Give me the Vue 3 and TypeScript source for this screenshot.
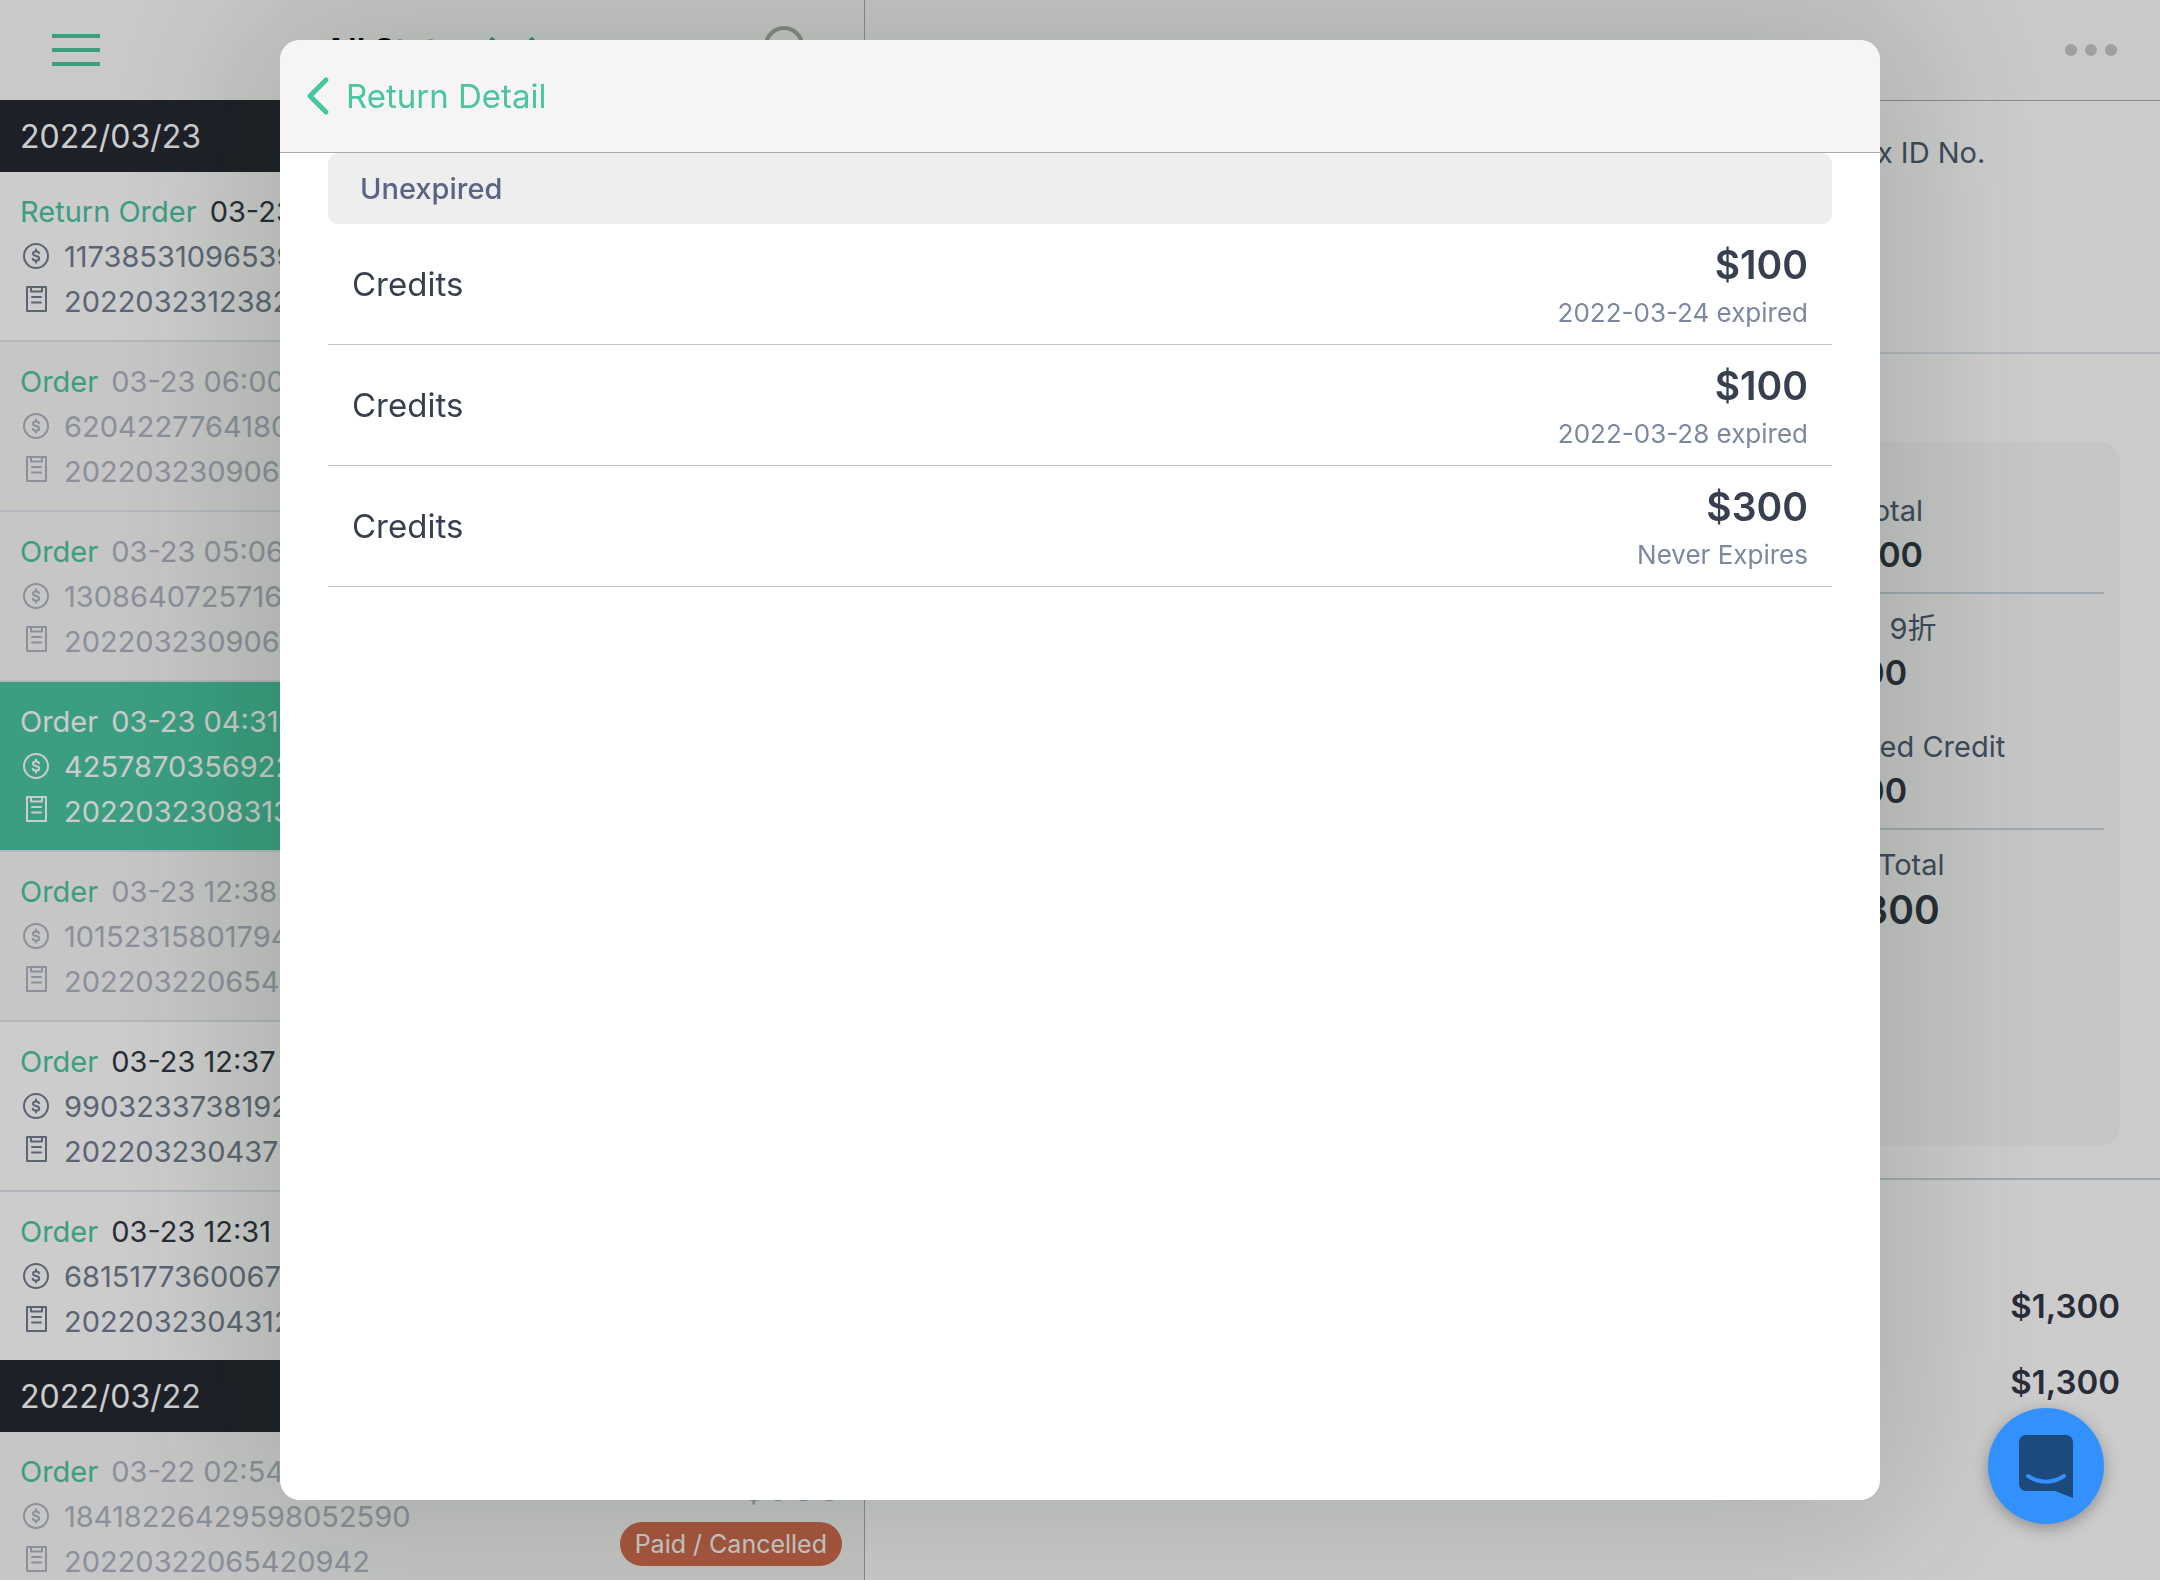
<script setup lang="ts">
type Tone = 'normal' | 'muted' | 'selected'

interface Order {
  kind: string
  time: string
  account: string
  serial: string
  tone: Tone
  amount?: string
  status?: string
}

interface Day {
  date: string
  orders: Order[]
}

const days: Day[] = [
  {
    date: '2022/03/23',
    orders: [
      { kind: 'Return Order', time: '03-23 12:38', account: '11738531096539', serial: '20220323123823', tone: 'normal' },
      { kind: 'Order', time: '03-23 06:00', account: '62042277641802', serial: '20220323090612', tone: 'muted' },
      { kind: 'Order', time: '03-23 05:06', account: '13086407257163', serial: '20220323090611', tone: 'muted' },
      { kind: 'Order', time: '03-23 04:31', account: '42578703569221', serial: '20220323083132', tone: 'selected' },
      { kind: 'Order', time: '03-23 12:38', account: '10152315801794', serial: '20220322065420', tone: 'muted' },
      { kind: 'Order', time: '03-23 12:37', account: '99032337381922', serial: '20220323043712', tone: 'normal' },
      { kind: 'Order', time: '03-23 12:31', account: '68151773600671', serial: '20220323043122', tone: 'normal' },
    ],
  },
  {
    date: '2022/03/22',
    orders: [
      {
        kind: 'Order',
        time: '03-22 02:54',
        account: '18418226429598052590',
        serial: '20220322065420942',
        tone: 'muted',
        amount: '$500',
        status: 'Paid / Cancelled',
      },
    ],
  },
]

const summary = [
  { label: 'Subtotal', value: '$1,300', line: true, large: false },
  { label: '全館- 9折', value: '-$100', line: false, large: false },
  { label: 'Applied Credit', value: '-$100', line: true, large: false },
  { label: 'Paid Total', value: '$1,300', line: false, large: true },
]

const payments = ['$1,300', '$1,300']

const credits = [
  { name: 'Credits', amount: '$100', note: '2022-03-24 expired' },
  { name: 'Credits', amount: '$100', note: '2022-03-28 expired' },
  { name: 'Credits', amount: '$300', note: 'Never Expires' },
]
</script>

<template>
  <div class="app">
    <div class="shell">
      <aside class="sidebar">
        <header class="bar">
          <button class="menu" type="button" aria-label="Menu"><i></i><i></i><i></i></button>
          <button class="filter" type="button">
            All Status
            <svg width="48" height="28" viewBox="0 0 48 28" fill="none" stroke="#2fb890" stroke-width="5" stroke-linecap="round">
              <path d="M4 4 24 23 44 4" />
            </svg>
          </button>
          <button class="search" type="button" aria-label="Search">
            <svg width="50" height="50" viewBox="0 0 50 50" fill="none" stroke="#a9aea9" stroke-width="4" stroke-linecap="round">
              <circle cx="20" cy="20" r="18" />
              <path d="m34 34 12 12" />
            </svg>
          </button>
        </header>

        <section v-for="day in days" :key="day.date">
          <h2 class="day">{{ day.date }}</h2>
          <ul class="orders">
            <li v-for="order in day.orders" :key="order.account" class="order" :class="order.tone">
              <div class="info">
                <p><span class="kind">{{ order.kind }}</span><span class="time">{{ order.time }}</span></p>
                <p class="code">
                  <svg width="32" height="28" viewBox="-2 1 32 28" fill="none" stroke="currentColor" stroke-width="2" stroke-linecap="round" stroke-linejoin="round">
                    <circle cx="14" cy="14" r="12" />
                    <path d="M17 11.200c-.3-1.100-1.400-1.700-3-1.700-1.800 0-3 .8-3 2.200 0 3.200 6.200 1.400 6.200 4.700 0 1.400-1.300 2.200-3.200 2.200-1.800 0-3-.7-3.300-1.900M14 7.600v1.900M14 18.600v1.900" />
                  </svg>
                  {{ order.account }}
                </p>
                <p class="code">
                  <svg width="32" height="28" viewBox="-2 3 32 28" overflow="visible" fill="none" stroke="currentColor" stroke-width="2" stroke-linejoin="round">
                    <path d="M5 2h19v24H5z" />
                    <path d="M9 2v4.500h11V2" />
                    <path d="M10 12h9M10 17.500h9" stroke-linecap="round" />
                  </svg>
                  {{ order.serial }}
                </p>
              </div>
              <div v-if="order.status" class="state">
                <strong>{{ order.amount }}</strong>
                <span class="badge">{{ order.status }}</span>
              </div>
            </li>
          </ul>
        </section>
      </aside>

      <main class="detail">
        <header class="bar detail-bar">
          <button class="more" type="button" aria-label="More"><i></i><i></i><i></i></button>
        </header>
        <section class="customer">
          <div class="column">Tax ID No.</div>
        </section>
        <section class="totals">
          <div class="card">
            <dl>
              <div v-for="item in summary" :key="item.label" class="sum" :class="{ line: item.line, large: item.large }">
                <dt>{{ item.label }}</dt>
                <dd>{{ item.value }}</dd>
              </div>
            </dl>
          </div>
        </section>
        <section class="payments">
          <p v-for="(payment, i) in payments" :key="i">{{ payment }}</p>
        </section>
      </main>
    </div>

    <div class="overlay">
      <div class="dialog" role="dialog" aria-label="Return Detail">
        <header class="dialog-bar">
          <button class="back" type="button">
            <svg width="24" height="40" viewBox="0 0 24 40" fill="none" stroke="currentColor" stroke-width="5" stroke-linecap="round" stroke-linejoin="round">
              <path d="M20 4 4 20l16 16" />
            </svg>
            Return Detail
          </button>
        </header>
        <div class="dialog-body">
          <h3>Unexpired</h3>
          <ul>
            <li v-for="(credit, i) in credits" :key="i" class="credit">
              <span class="name">{{ credit.name }}</span>
              <div class="worth">
                <strong>{{ credit.amount }}</strong>
                <small>{{ credit.note }}</small>
              </div>
            </li>
          </ul>
        </div>
      </div>
    </div>

    <button class="chat" type="button" aria-label="Open chat">
      <svg width="56" height="64" viewBox="0 0 56 64" fill="none">
        <path d="M8 1h40a7 7 0 0 1 7 7v56l-18-7H8a7 7 0 0 1-7-7V8a7 7 0 0 1 7-7z" fill="#1c4a7d" />
        <path d="M10 42c11 7.500 25 7.500 36 0" stroke="#3391fd" stroke-width="4" stroke-linecap="round" />
      </svg>
    </button>
  </div>
</template>

<style>
body {
  margin: 0;
  overflow: hidden;
}
</style>

<style scoped>
.app {
  font-family: Inter, 'Noto Sans CJK TC', sans-serif;
  font-size: 29px;
  line-height: 45px;
  color: #313845;
}

.app * {
  box-sizing: border-box;
}

h2, h3, p, ul, dl, dd {
  margin: 0;
  padding: 0;
  list-style: none;
}

button {
  border: 0;
  padding: 0;
  background: none;
  font: inherit;
  color: inherit;
}

svg {
  display: block;
  flex: none;
}

.shell {
  display: flex;
  height: 100vh;
  overflow: hidden;
  background: #fff;
}

.sidebar {
  flex: none;
  width: 40%;
}

.bar {
  display: flex;
  height: 100px;
  background: #fcfcfc;
}

.menu {
  display: flex;
  flex-direction: column;
  justify-content: center;
  gap: 10px;
  width: 48px;
  margin-left: 52px;
}

.menu i {
  height: 4px;
  background: #4ac6a2;
}

.filter {
  display: flex;
  align-items: center;
  gap: 12px;
  margin-left: 224px;
  font-size: 33px;
  font-weight: 600;
  color: #000;
}

.search {
  align-self: start;
  margin: 26px 50px 0 auto;
}

.day {
  height: 72px;
  padding-left: 20px;
  background: #262933;
  font-size: 32px;
  font-weight: 400;
  line-height: 74px;
  color: #fff;
}

.order {
  display: flex;
  justify-content: space-between;
  padding: 17px 22px 16px 20px;
  border-bottom: 2px solid #dee5ec;
}

.order:last-child {
  border-bottom: 0;
}

.kind {
  margin-right: 13px;
  color: #4ac6a2;
}

.code {
  display: flex;
  align-items: center;
  gap: 12px;
  color: #737e92;
}

.muted {
  background: #f8f8f8;
}

.muted .time,
.muted .code,
.muted .state {
  color: #aeb4c2;
}

.selected {
  background: #4ac6a2;
}

.selected .kind,
.selected .time,
.selected .code {
  color: #fff;
}

.state {
  display: flex;
  flex-direction: column;
  align-items: flex-end;
  gap: 13px;
  padding-top: 16px;
}

.state strong {
  font-size: 39px;
  font-weight: 600;
  line-height: 44px;
}

.muted .badge {
  height: 44px;
  padding: 0 15px;
  border-radius: 22px;
  background: #d66c50;
  font-size: 25px;
  line-height: 44px;
  color: #fff;
}

.detail {
  flex: 1;
  min-width: 0;
  border-left: 1px solid #adadad;
}

.detail-bar {
  height: 101px;
  justify-content: flex-end;
  border-bottom: 1px solid #adadad;
}

.more {
  display: flex;
  align-items: center;
  gap: 8px;
  margin-right: 43px;
}

.more i {
  width: 12px;
  height: 12px;
  border-radius: 50%;
  background: #c8c8c8;
}

.customer {
  display: flex;
  justify-content: flex-end;
  height: 253px;
  padding: 29px 40px 0;
  border-bottom: 2px solid #dee5ec;
  color: #4f5c73;
}

.column {
  width: 276px;
}

.totals {
  padding: 88px 40px 32px;
  border-bottom: 2px solid #c6d4df;
}

.card {
  display: flex;
  justify-content: flex-end;
  height: 704px;
  padding: 34px 16px;
  border-radius: 20px;
  background: #f8f8f8;
}

.card dl {
  width: 294px;
}

.sum {
  height: 118px;
  padding-top: 13px;
  line-height: 44px;
}

.sum.line {
  border-bottom: 2px solid #c6d4df;
}

.sum dt {
  color: #4f5c73;
}

.sum dd {
  font-size: 34px;
  font-weight: 600;
}

.sum.large dd {
  font-size: 39px;
  line-height: 46px;
}

.payments {
  padding: 88px 40px 0;
  font-size: 33px;
  font-weight: 600;
  line-height: 76px;
  text-align: right;
}

.overlay {
  position: fixed;
  inset: 0;
  display: flex;
  padding: 40px 280px 80px;
  background: rgba(0, 0, 0, 0.2);
}

.dialog {
  flex: 1;
  overflow: hidden;
  border-radius: 20px;
  background: #fff;
  box-shadow: 0 0 160px 30px rgba(10, 45, 10, 0.18);
}

.dialog-bar {
  display: flex;
  height: 113px;
  padding-left: 26px;
  border-bottom: 1px solid #a9a9ab;
  background: #f6f4f5;
}

.back {
  display: flex;
  align-items: center;
  gap: 16px;
  font-size: 33px;
  color: #47c6a1;
}

.dialog-body {
  padding: 0 48px;
}

.dialog-body h3 {
  height: 71px;
  padding-left: 32px;
  border-radius: 10px;
  background: #eee;
  font-size: 29px;
  font-weight: 500;
  line-height: 71px;
  color: #5a6483;
}

.credit {
  display: flex;
  align-items: center;
  justify-content: space-between;
  height: 121px;
  padding: 0 24px;
  border-bottom: 1px solid #c4c4c4;
}

.name {
  font-size: 33px;
  color: #383f4f;
}

.worth {
  display: flex;
  flex-direction: column;
  padding-top: 2px;
  text-align: right;
}

.worth strong {
  font-size: 39px;
  font-weight: 600;
  line-height: 56px;
  color: #383f4f;
}

.worth small {
  font-size: 26px;
  line-height: 40px;
  color: #7d88a0;
}

.chat {
  position: fixed;
  right: 56px;
  bottom: 56px;
  display: grid;
  place-items: center;
  width: 116px;
  height: 116px;
  border-radius: 50%;
  background: #3391fd;
  box-shadow: 0 4px 16px rgba(0, 0, 0, 0.3);
}
</style>
